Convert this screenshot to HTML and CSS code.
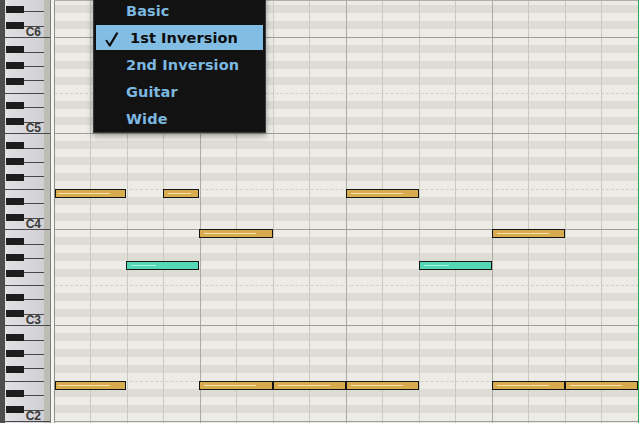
FILE: index.html
```html
<!DOCTYPE html>
<html>
<head>
<meta charset="utf-8">
<link rel="stylesheet" href="styles.css">
</head>
<body>
<div class="app">
  <div class="keys">
    <svg width="50" height="423" viewBox="0 0 50 423">
      <defs>
        <linearGradient id="wk" x1="0" x2="1" y1="0" y2="0">
          <stop offset="0" stop-color="#e1e1e5"/>
          <stop offset="1" stop-color="#cfcfd4"/>
        </linearGradient>
        <g id="oct">
          <rect x="5" y="0" width="45" height="1" fill="#474747"/>
          <rect x="5" y="-40" width="39" height="1" fill="#474747"/>
          <rect x="24" y="-11" width="20" height="1" fill="#474747"/>
          <rect x="24" y="-26" width="20" height="1" fill="#474747"/>
          <rect x="24" y="-53" width="20" height="1" fill="#474747"/>
          <rect x="24" y="-67" width="20" height="1" fill="#474747"/>
          <rect x="24" y="-81" width="20" height="1" fill="#474747"/>
          <rect x="6" y="-15" width="18" height="7" fill="#1d1d1d"/>
          <rect x="6" y="-31" width="18" height="7" fill="#1d1d1d"/>
          <rect x="6" y="-55" width="18" height="7" fill="#1d1d1d"/>
          <rect x="6" y="-71" width="18" height="7" fill="#1d1d1d"/>
          <rect x="6" y="-87" width="18" height="7" fill="#1d1d1d"/>
        </g>
      </defs>
      <rect x="0" y="0" width="5" height="423" fill="#4e4e4e"/>
      <rect x="5" y="0" width="39" height="423" fill="url(#wk)"/>
      <rect x="44" y="0" width="6" height="423" fill="#bdbdb5"/>
      <use href="#oct" y="37"/>
      <use href="#oct" y="133"/>
      <use href="#oct" y="229"/>
      <use href="#oct" y="325"/>
      <use href="#oct" y="421"/>
      <text class="lbl" x="41" y="36" text-anchor="end">C6</text>
      <text class="lbl" x="41" y="132" text-anchor="end">C5</text>
      <text class="lbl" x="41" y="228" text-anchor="end">C4</text>
      <text class="lbl" x="41" y="324" text-anchor="end">C3</text>
      <text class="lbl" x="41" y="420" text-anchor="end">C2</text>
    </svg>
  </div>
  <div class="sep"></div>
  <div class="roll">
    <div class="oct"></div>
    <div class="oct"></div>
    <div class="oct"></div>
    <div class="oct"></div>
    <div class="oct"></div>
    <div class="oct"></div>

    <div class="note o edge" style="left:1px;top:189px;width:71px"><i style="width:52px"></i></div>
    <div class="note o" style="left:109px;top:189px;width:36px"><i style="width:23px"></i></div>
    <div class="note o" style="left:292px;top:189px;width:73px"><i style="width:52px"></i></div>

    <div class="note o" style="left:145px;top:229px;width:74px"><i style="width:52px"></i></div>
    <div class="note o" style="left:438px;top:229px;width:73px"><i style="width:52px"></i></div>

    <div class="note t" style="left:72px;top:261px;width:73px"><i style="width:25px"></i></div>
    <div class="note t" style="left:365px;top:261px;width:73px"><i style="width:25px"></i></div>

    <div class="note o edge" style="left:1px;top:381px;width:71px"><i style="width:52px"></i></div>
    <div class="note o" style="left:145px;top:381px;width:74px"><i style="width:52px"></i></div>
    <div class="note o" style="left:219px;top:381px;width:73px"><i style="width:52px"></i></div>
    <div class="note o" style="left:292px;top:381px;width:73px"><i style="width:52px"></i></div>
    <div class="note o" style="left:438px;top:381px;width:73px"><i style="width:52px"></i></div>
    <div class="note o" style="left:511px;top:381px;width:73px"><i style="width:52px"></i></div>

    <div class="playhead"></div>
  </div>

  <div class="menu">
    <div class="item">Basic</div>
    <div class="item sel">
      <svg class="check" width="14" height="15" viewBox="0 0 14 15"><path d="M0.3 8.6 L1.9 7.8 L4.6 11.6 L11.4 0.2 L13.4 1.1 L5.5 14.6 L4.1 14.6 Z" fill="#0d0d0d"/></svg>
      <span>1st Inversion</span>
    </div>
    <div class="item">2nd Inversion</div>
    <div class="item">Guitar</div>
    <div class="item">Wide</div>
  </div>
</div>
</body>
</html>
```

FILE: styles.css
```css
html, body {
  margin: 0;
  padding: 0;
  background: #ebebe4;
  overflow: hidden;
}

.app {
  position: relative;
  display: flex;
  width: 639px;
  height: 423px;
  overflow: hidden;
  font-family: "DejaVu Sans", "Liberation Sans", sans-serif;
}

.keys {
  flex: none;
  width: 50px;
  height: 423px;
}

.keys svg {
  display: block;
}

.lbl {
  font-family: "Liberation Sans", Arial, sans-serif;
  font-weight: bold;
  font-size: 12px;
  fill: #383838;
}

.sep {
  flex: none;
  width: 3px;
  border-left: 1px solid #7d7d7b;
  background: #f4f4f1;
}

.roll {
  position: relative;
  flex: 1;
  display: flex;
  flex-direction: column;
  overflow: hidden;
}

.roll::before {
  content: "";
  position: absolute;
  left: 0;
  right: 0;
  top: 0;
  height: 1px;
  background: #aeaea8;
  z-index: 2;
}

.oct {
  position: relative;
  flex: none;
  height: 96px;
  background:
    linear-gradient(#9f9f99, #9f9f99) 0 0 / 100% 1px no-repeat,
    linear-gradient(#8c8c88, #8c8c88) 0 0 / 1px 100% no-repeat,
    repeating-linear-gradient(to right, #abaaa4 0 1px, transparent 1px 146px),
    repeating-linear-gradient(to right, #c9c9c2 0 1px, transparent 1px 36px, #c9c9c2 36px 37px, transparent 37px 73px),
    linear-gradient(to bottom,
      #ecebe5 0 8px,
      #dddcd5 8px 16px,
      #ecebe5 16px 24px,
      #dddcd5 24px 32px,
      #ecebe5 32px 40px,
      #dddcd5 40px 48px,
      #ecebe5 48px 64px,
      #dddcd5 64px 72px,
      #ecebe5 72px 80px,
      #dddcd5 80px 88px,
      #ecebe5 88px 96px);
}

.oct:first-child {
  margin-top: -59px;
}

.oct::after {
  content: "";
  position: absolute;
  left: 1px;
  right: 0;
  top: 56px;
  border-top: 1px dashed #d0d0c9;
}

.note {
  position: absolute;
  z-index: 1;
  box-sizing: border-box;
  height: 9px;
  border: 1px solid #141414;
}

.note i {
  position: absolute;
  left: 4px;
  top: 3px;
  height: 1px;
}

.note.edge i {
  left: 2px;
}

.note.o {
  background: #d9ab4f;
}

.note.o i {
  background: #f6e2ab;
}

.note.t {
  background: #55d8b5;
}

.note.t i {
  background: #adf3dc;
}

.playhead {
  position: absolute;
  top: 0;
  bottom: 0;
  right: 0;
  width: 1px;
  background: #2fa94d;
  z-index: 3;
}

.menu {
  position: absolute;
  left: 93px;
  top: -7px;
  width: 167px;
  padding: 4px 2px 1px;
  background: #121212;
  border: 1px solid #3c3c3c;
  box-shadow: 0 3px 6px rgba(0, 0, 0, 0.35);
  z-index: 5;
  display: flex;
  flex-direction: column;
  gap: 2px;
}

.item {
  display: flex;
  align-items: center;
  height: 25px;
  padding-left: 30px;
  color: #7cb8e0;
  font-weight: bold;
  font-size: 14.5px;
  letter-spacing: 0.1px;
  white-space: nowrap;
}

.item.sel {
  padding-left: 9px;
  background: #82bde3;
  color: #0d0d0d;
}

.check {
  flex: none;
  display: block;
  margin-top: 4px;
  margin-right: 11px;
}
```
